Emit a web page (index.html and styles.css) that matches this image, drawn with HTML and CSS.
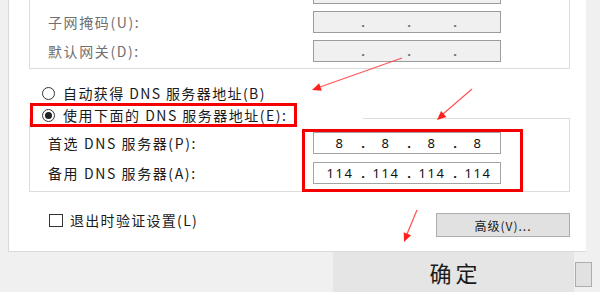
FILE: index.html
```html
<!DOCTYPE html>
<html lang="zh-CN">
<head>
    <meta charset="UTF-8">
    <title>Internet 协议版本 4 (TCP/IPv4) 属性</title>
    <link rel="stylesheet" href="styles.css">
</head>
<body>
    <div class="window">
        <div class="panel">
            <!-- Static address group, top is scrolled out of view -->
            <div class="group ip-group">
                <div class="field-row">
                    <span class="label"></span>
                    <div class="ip-box disabled"></div>
                </div>
                <div class="field-row">
                    <span class="label">子网掩码(U):</span>
                    <div class="ip-box disabled">
                        <span class="octet"></span><span class="dot">.</span>
                        <span class="octet"></span><span class="dot">.</span>
                        <span class="octet"></span><span class="dot">.</span>
                        <span class="octet"></span>
                    </div>
                </div>
                <div class="field-row">
                    <span class="label">默认网关(D):</span>
                    <div class="ip-box disabled">
                        <span class="octet"></span><span class="dot">.</span>
                        <span class="octet"></span><span class="dot">.</span>
                        <span class="octet"></span><span class="dot">.</span>
                        <span class="octet"></span>
                    </div>
                </div>
            </div>

            <label class="radio-row">
                <span class="radio"></span>
                <span>自动获得 DNS 服务器地址(B)</span>
            </label>

            <label class="radio-row legend mark">
                <span class="radio checked"></span>
                <span>使用下面的 DNS 服务器地址(E):</span>
            </label>

            <!-- DNS group -->
            <div class="group dns-group">
                <div class="dns-labels">
                    <span>首选 DNS 服务器(P):</span>
                    <span>备用 DNS 服务器(A):</span>
                </div>
                <div class="dns-inputs mark">
                    <div class="ip-box">
                        <span class="octet">8</span><span class="dot">.</span>
                        <span class="octet">8</span><span class="dot">.</span>
                        <span class="octet">8</span><span class="dot">.</span>
                        <span class="octet">8</span>
                    </div>
                    <div class="ip-box">
                        <span class="octet">114</span><span class="dot">.</span>
                        <span class="octet">114</span><span class="dot">.</span>
                        <span class="octet">114</span><span class="dot">.</span>
                        <span class="octet">114</span>
                    </div>
                </div>
            </div>

            <div class="options-row">
                <label class="check">
                    <span class="box"></span>
                    <span>退出时验证设置(L)</span>
                </label>
                <button class="btn advanced">高级(V)...</button>
            </div>
        </div>

        <div class="footer">
            <button class="btn ok">确定</button>
            <span class="btn cancel"></span>
        </div>

        <!-- red annotation arrows -->
        <svg class="arrows" width="600" height="301" viewBox="0 0 600 301">
            <g stroke="#ff3b3b" stroke-width="1.3" stroke-opacity="0.85" fill="none">
                <line x1="402" y1="58" x2="320" y2="87"/>
                <line x1="472" y1="89" x2="443" y2="114"/>
                <line x1="417" y1="210" x2="407" y2="234"/>
            </g>
            <g fill="#ff2020">
                <polygon points="312,90 321.8,90.8 319.2,83.2"/>
                <polygon points="437,120 446.4,117 441.1,111"/>
                <polygon points="404,242 411.1,235.2 403.7,232.2"/>
            </g>
        </svg>
    </div>
</body>
</html>
```

FILE: styles.css
```css
body {
    margin: 0;
    background: #fff;
    font-family: "Noto Sans CJK SC", "Noto Sans", sans-serif;
    font-size: 14px;
    color: #1a1a1a;
    width: 600px;
    height: 301px;
    overflow: hidden;
}

.window {
    position: relative;
    background: #f0f0f0;
    height: 292px;
    overflow: hidden;
}

/* White property sheet */
.panel {
    display: flow-root;
    box-sizing: border-box;
    margin-left: 8px;
    width: 578px;
    height: 252px;
    padding-left: 20px;
    background: #fff;
    border-left: 1px solid #dadada;
    border-bottom: 1px solid #dadada;
}

.group {
    box-sizing: border-box;
    width: 541px;
    border: 1px solid #dcdcdc;
}

.ip-group {
    margin-top: -27px;
    padding: 8px 0 6px 18px;
    display: flex;
    flex-direction: column;
    gap: 7px;
}

.field-row {
    display: flex;
    align-items: center;
    height: 22px;
}

.label {
    width: 265px;
    letter-spacing: 1.6px;
    color: #707070;
}

/* IP address control */
.ip-box {
    box-sizing: border-box;
    width: 188px;
    height: 22px;
    padding-left: 9px;
    border: 1px solid #a3a3a3;
    background: #fff;
    display: flex;
    align-items: center;
    font-family: "Noto Sans", sans-serif;
    font-size: 13px;
    color: #111;
}

.ip-box.disabled {
    background: #f0f0f0;
    border-color: #9c9c9c;
    color: #6d6d6d;
}

.octet {
    width: 34px;
    text-align: center;
    letter-spacing: 1.5px;
}

.dot {
    width: 12px;
    text-align: center;
    font-weight: bold;
}

/* Radio buttons */
.radio-row {
    display: flex;
    align-items: center;
    height: 16px;
    margin-top: 16px;
    padding-left: 13px;
    white-space: nowrap;
    letter-spacing: 1.4px;
}

.radio {
    box-sizing: border-box;
    flex: none;
    width: 13px;
    height: 13px;
    margin-right: 8px;
    border: 1px solid #333;
    border-radius: 50%;
    background: #fff;
    display: flex;
    align-items: center;
    justify-content: center;
}

.radio.checked::after {
    content: "";
    width: 7px;
    height: 7px;
    border-radius: 50%;
    background: #222;
}

.mark {
    border: 3px solid #f40000;
}

.legend {
    box-sizing: border-box;
    position: relative;
    z-index: 1;
    width: 267px;
    height: 24px;
    margin: 2px 0 0 1px;
    padding-left: 9px;
    background: #fff;
    letter-spacing: 1.5px;
}

/* DNS group */
.dns-group {
    display: flex;
    margin-top: -9px;
    padding-top: 10px;
    border-top-color: transparent;
    position: relative;
}

.dns-group::before {
    content: "";
    position: absolute;
    top: -1px;
    left: 333px;
    right: -1px;
    border-top: 1px solid #dcdcdc;
}

.dns-labels {
    width: 254px;
    padding: 3px 0 0 18px;
    display: flex;
    flex-direction: column;
    gap: 8px;
    letter-spacing: 1.6px;
}

.dns-labels span {
    height: 22px;
    line-height: 22px;
}

.dns-inputs {
    box-sizing: border-box;
    width: 221px;
    margin-bottom: -1px;
    padding: 0 0 5px 8px;
    display: flex;
    flex-direction: column;
    gap: 8px;
}

/* Bottom options */
.options-row {
    display: flex;
    justify-content: space-between;
    width: 541px;
    margin-top: 21px;
}

.check {
    display: flex;
    align-items: center;
    height: 14px;
    margin-left: 20px;
    letter-spacing: 1.3px;
}

.box {
    box-sizing: border-box;
    width: 14px;
    height: 13px;
    margin-right: 7px;
    border: 1px solid #333;
    background: #fff;
}

.btn {
    box-sizing: border-box;
    font-family: inherit;
    color: #1a1a1a;
    background: #e1e1e1;
    border: 1px solid #adadad;
    padding: 0;
}

.advanced {
    width: 134px;
    height: 24px;
    font-size: 12px;
    letter-spacing: 1px;
}

.footer {
    display: flex;
    align-items: flex-start;
    justify-content: flex-end;
    height: 40px;
    padding-right: 8px;
}

.ok {
    width: 241px;
    height: 40px;
    border: none;
    background: #e5e5e5;
    font-size: 22px;
    letter-spacing: 4px;
    padding-left: 4px;
}

.cancel {
    display: block;
    width: 17px;
    height: 25px;
    margin: 10px 0 0 1px;
}

.arrows {
    position: absolute;
    left: 0;
    top: 0;
    pointer-events: none;
}
```
